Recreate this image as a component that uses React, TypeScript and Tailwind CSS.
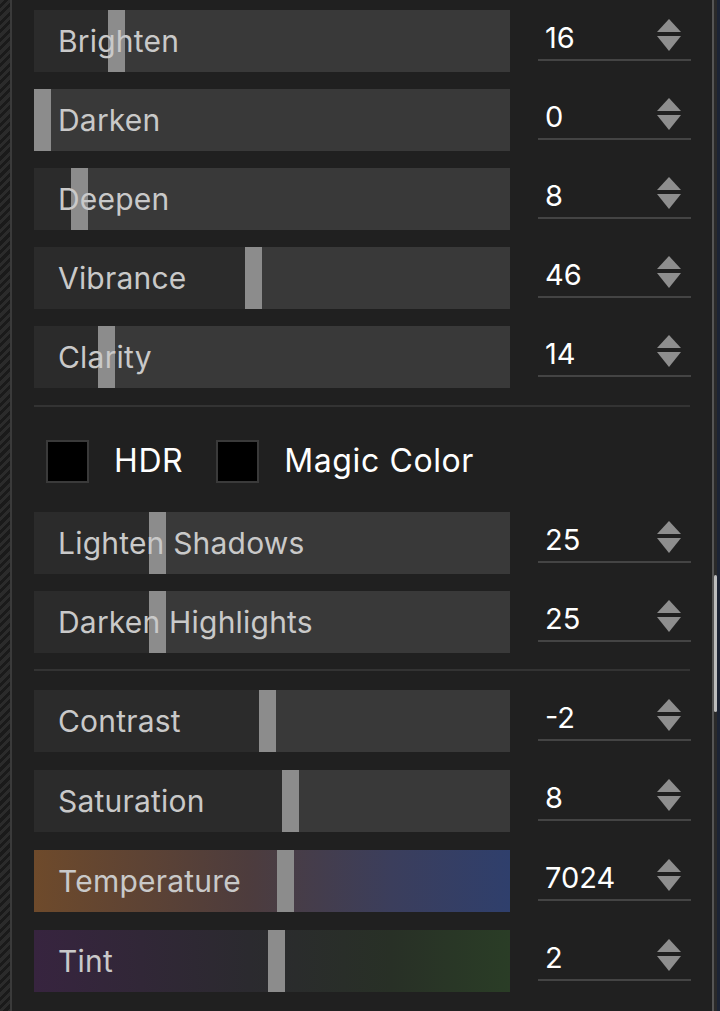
import React from "react"

type Row = { label: string; value: string; pos: number; bar?: string }

const top: Row[] = [
  { label: "Brighten", value: "16", pos: 74 },
  { label: "Darken", value: "0", pos: 0 },
  { label: "Deepen", value: "8", pos: 37 },
  { label: "Vibrance", value: "46", pos: 211 },
  { label: "Clarity", value: "14", pos: 64 },
]

const middle: Row[] = [
  { label: "Lighten Shadows", value: "25", pos: 115 },
  { label: "Darken Highlights", value: "25", pos: 115 },
]

const bottom: Row[] = [
  { label: "Contrast", value: "-2", pos: 225 },
  { label: "Saturation", value: "8", pos: 248 },
  {
    label: "Temperature",
    value: "7024",
    pos: 243,
    bar: "bg-[linear-gradient(90deg,#6e4a2b_0%,#4d3c3d_45%,#3b3e5c_75%,#2f3f6c_100%)]",
  },
  {
    label: "Tint",
    value: "2",
    pos: 234,
    bar: "bg-[linear-gradient(90deg,#37243f_0%,#2b2a2f_45%,#283026_75%,#2a3d26_100%)]",
  },
]

function Stepper() {
  return (
    <svg width="24" height="32" viewBox="0 0 24 32" className="shrink-0">
      <polygon points="12,0 24,13 0,13" fill="#8e8e8e" />
      <polygon points="0,17 24,17 12,32" fill="#8e8e8e" />
    </svg>
  )
}

function SliderRow({ row }: { row: Row }) {
  return (
    <div className="flex items-start h-[62px]">
      <div className={`relative w-[476px] h-[62px] flex items-center ${row.bar ?? "bg-[#393939]"}`}>
        {!row.bar && (
          <div className="absolute left-0 top-0 h-full bg-[#2b2b2b]" style={{ width: row.pos }} />
        )}
        <div className="absolute top-0 h-full w-[17px] bg-[#8c8c8c]" style={{ left: row.pos }} />
        <span className="relative pl-[24px] text-[30px] text-[#c9c9c9] tracking-[0.2px]">{row.label}</span>
      </div>
      <div className="ml-[28px] w-[153px] h-[51px] flex items-center justify-between pl-[7px] pr-[10px] border-b-2 border-[#444]">
        <span className="pt-[6px] text-[29px] text-white">{row.value}</span>
        <Stepper />
      </div>
    </div>
  )
}

function Check({ label }: { label: string }) {
  return (
    <div className="flex items-center">
      <div className="w-[43px] h-[43px] bg-black border-2 border-[#3a3a3a]" />
      <span className="ml-[25px] text-[32px] text-white tracking-[0.6px]">{label}</span>
    </div>
  )
}

export default function App() {
  return (
    <div
      className="flex w-[720px] h-[1011px] overflow-hidden bg-[#202020]"
      style={{ fontFamily: "Inter, 'Liberation Sans', sans-serif" }}
    >
      <div className="w-[10px] h-full bg-[repeating-linear-gradient(135deg,#2b2b2b_0px,#2b2b2b_3px,#1a1a1a_3px,#1a1a1a_6px)]" />
      <div className="w-[2px] h-full bg-[#3a3a3a]" />
      <div className="flex-1 flex flex-col pl-[22px] pt-[10px]">
        <div className="flex flex-col gap-[17px]">
          {top.map((r) => (
            <SliderRow key={r.label} row={r} />
          ))}
        </div>
        <div className="mt-[17px] w-[656px] h-[2px] bg-[#333]" />
        <div className="mt-[30px] flex items-center gap-[33px] pl-[12px]">
          <Check label="HDR" />
          <Check label="Magic Color" />
        </div>
        <div className="mt-[27px] flex flex-col gap-[17px]">
          {middle.map((r) => (
            <SliderRow key={r.label} row={r} />
          ))}
        </div>
        <div className="mt-[16px] w-[656px] h-[2px] bg-[#333]" />
        <div className="mt-[19px] flex flex-col gap-[18px]">
          {bottom.map((r) => (
            <SliderRow key={r.label} row={r} />
          ))}
        </div>
      </div>
      <div className="w-[8px] h-full flex">
        <div className="w-[2px] h-full bg-[#555]" />
        <div className="w-[3px] h-full bg-[#2a2a2a] flex flex-col">
          <div className="h-[575px]" />
          <div className="h-[137px] bg-[#bdbdbd] rounded-full" />
        </div>
        <div className="w-[3px] h-full bg-[#1c2435]" />
      </div>
    </div>
  )
}
